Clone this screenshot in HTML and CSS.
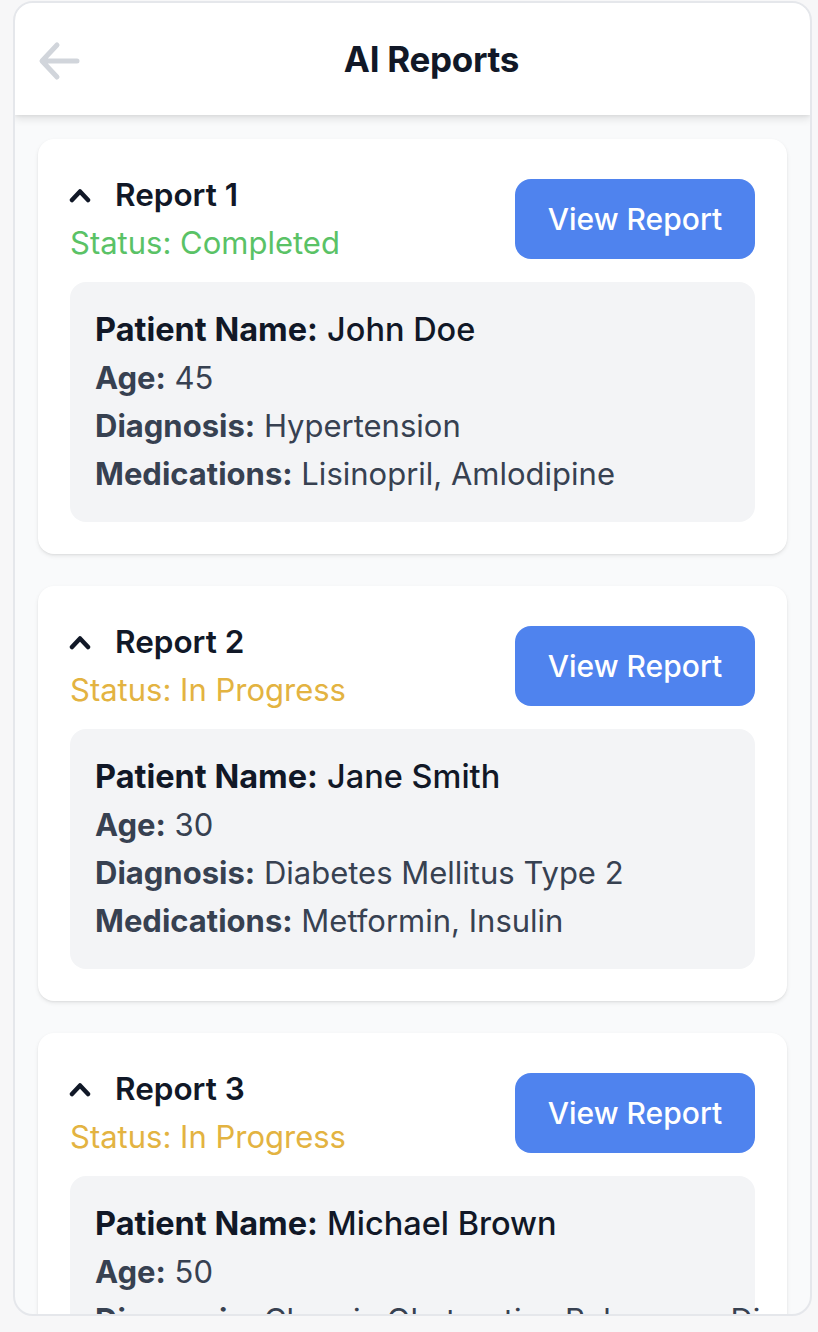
FILE: index.html
```html
<!DOCTYPE html>
<html lang="en">
<head>
<meta charset="utf-8">
<title>AI Reports</title>
<link rel="stylesheet" href="styles.css">
</head>
<body>
<div class="frame">
  <header class="topbar">
    <button class="back" aria-label="Back">
      <svg width="44" height="40" viewBox="0 0 44 40" fill="none" stroke="#d1d5db" stroke-width="5" stroke-linecap="round" stroke-linejoin="round"><path d="M40 20H6M20 4L5 20l15 16"/></svg>
    </button>
    <h1 class="title">AI Reports</h1>
  </header>
  <main class="list">
    <section class="card">
      <div class="card-head">
        <div class="head-left">
          <div class="report-title">
            <svg class="chev" width="24" height="16" viewBox="0 0 24 16" fill="none" stroke="#111827" stroke-width="4.5" stroke-linecap="round" stroke-linejoin="round"><path d="M4 13l8-8.5 8 8.5"/></svg>
            <span>Report 1</span>
          </div>
          <div class="status done">Status: Completed</div>
        </div>
        <button class="view">View Report</button>
      </div>
      <div class="details">
        <p class="name"><b>Patient Name:</b> <span>John Doe</span></p>
        <p><b>Age:</b> 45</p>
        <p><b>Diagnosis:</b> Hypertension</p>
        <p><b>Medications:</b> Lisinopril, Amlodipine</p>
      </div>
    </section>
    <section class="card">
      <div class="card-head">
        <div class="head-left">
          <div class="report-title">
            <svg class="chev" width="24" height="16" viewBox="0 0 24 16" fill="none" stroke="#111827" stroke-width="4.5" stroke-linecap="round" stroke-linejoin="round"><path d="M4 13l8-8.5 8 8.5"/></svg>
            <span>Report 2</span>
          </div>
          <div class="status progress">Status: In Progress</div>
        </div>
        <button class="view">View Report</button>
      </div>
      <div class="details">
        <p class="name"><b>Patient Name:</b> <span>Jane Smith</span></p>
        <p><b>Age:</b> 30</p>
        <p><b>Diagnosis:</b> Diabetes Mellitus Type 2</p>
        <p><b>Medications:</b> Metformin, Insulin</p>
      </div>
    </section>
    <section class="card">
      <div class="card-head">
        <div class="head-left">
          <div class="report-title">
            <svg class="chev" width="24" height="16" viewBox="0 0 24 16" fill="none" stroke="#111827" stroke-width="4.5" stroke-linecap="round" stroke-linejoin="round"><path d="M4 13l8-8.5 8 8.5"/></svg>
            <span>Report 3</span>
          </div>
          <div class="status progress">Status: In Progress</div>
        </div>
        <button class="view">View Report</button>
      </div>
      <div class="details">
        <p class="name"><b>Patient Name:</b> <span>Michael Brown</span></p>
        <p><b>Age:</b> 50</p>
        <p><b>Diagnosis:</b> Chronic Obstructive Pulmonary Disease</p>
        <p><b>Medications:</b> Albuterol, Tiotropium</p>
      </div>
    </section>
  </main>
</div>
</body>
</html>
```
FILE: styles.css
```css
* { box-sizing: border-box; }
html, body { margin: 0; padding: 0; }
body {
  background: #f7f7f8;
  font-family: Inter, "Noto Sans", sans-serif;
  width: 818px;
  height: 1332px;
  overflow: hidden;
}
.frame {
  margin: 1px 0 0 13px;
  width: 799px;
  height: 1315px;
  border: 2px solid #e5e7eb;
  border-radius: 20px;
  background: #f9fafb;
  overflow: hidden;
  display: flex;
  flex-direction: column;
}
.topbar {
  position: relative;
  z-index: 1;
  height: 112px;
  flex: none;
  background: #fff;
  display: flex;
  align-items: center;
  justify-content: center;
  box-shadow: 0 4px 8px rgba(0,0,0,0.10), 0 1px 3px rgba(0,0,0,0.06);
}
.back {
  position: absolute;
  left: 22px;
  top: 38px;
  border: 0;
  background: none;
  padding: 0;
  display: flex;
}
.title {
  margin: 0 0 0 38px;
  font-size: 35px;
  font-weight: 700;
  color: #111827;
  letter-spacing: -0.3px;
}
.list {
  padding: 24px 23px;
  display: flex;
  flex-direction: column;
  gap: 32px;
}
.card {
  background: #fff;
  border-radius: 16px;
  padding: 32px;
  box-shadow: 0 2px 4px rgba(0,0,0,0.08), 0 1px 2px rgba(0,0,0,0.05);
}
.card-head {
  display: flex;
  justify-content: space-between;
  align-items: center;
  margin-bottom: 15px;
}
.report-title {
  display: flex;
  align-items: center;
  gap: 23px;
  font-size: 31.5px;
  line-height: 48px;
  font-weight: 600;
  color: #111827;
}
.chev { flex: none; margin-left: -2px; }
.status {
  font-size: 31px;
  line-height: 48px;
}
.done { color: #5ac266; }
.progress { color: #e3b341; }
.view {
  width: 240px;
  height: 80px;
  border: 0;
  border-radius: 16px;
  background: #4f83ee;
  color: #fff;
  font-family: inherit;
  font-size: 30px;
  font-weight: 500;
}
.details {
  background: #f3f4f6;
  border-radius: 16px;
  padding: 24px 25px;
}
.details p {
  margin: 0;
  font-size: 31px;
  line-height: 48px;
  color: #374151;
  white-space: nowrap;
}
.details b { font-weight: 700; }
.details .name { color: #111827; font-size: 32.5px; }
.details .name span { font-weight: 500; }
```
